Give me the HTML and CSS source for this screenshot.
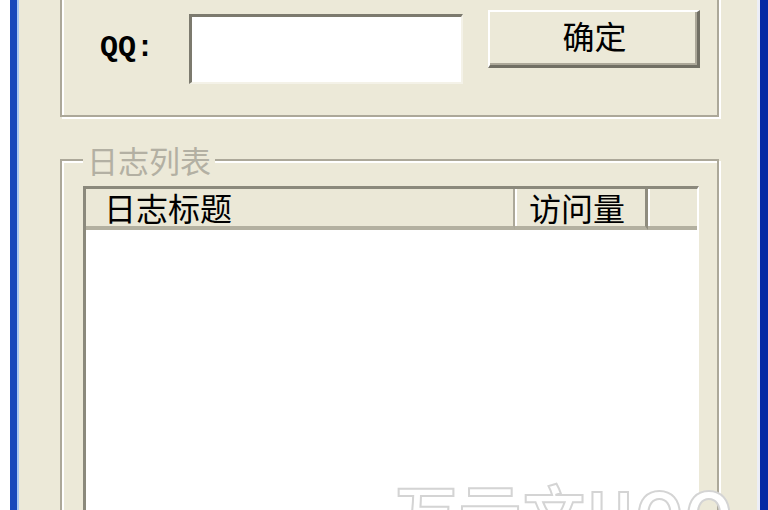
FILE: index.html
```html
<!DOCTYPE html>
<html lang="zh-CN">
<head>
<meta charset="utf-8">
<title>日志查看</title>
<link rel="stylesheet" href="styles.css">
</head>
<body>
<div class="window">
  <div class="client">
    <div class="group query">
      <div class="qq-label">QQ:</div>
      <div class="textbox"></div>
      <div class="button">确定</div>
    </div>
    <fieldset class="group logs">
      <legend>日志列表</legend>
      <div class="listview">
        <div class="header">
          <div class="col col-title">日志标题</div>
          <div class="col col-visits">访问量</div>
          <div class="col col-rest"></div>
        </div>
        <div class="rows"></div>
      </div>
    </fieldset>
  </div>
  <div class="mark">万云文UQQ</div>
</div>
</body>
</html>
```
FILE: styles.css
```css
* { box-sizing: border-box; }

html, body {
  margin: 0;
  padding: 0;
  background: #ffffff;
  overflow: hidden;
}

body {
  font-family: "Noto Sans CJK SC", "Liberation Sans", sans-serif;
  color: #000;
}

/* window frame: blue XP border on both sides */
.window {
  position: relative;
  margin-left: 10px;
  width: 758px;
  height: 510px;
  border-left: 7px solid #1848bb;
  border-right: 8px solid #0628a4;
  background: #ece9d8;
  box-shadow: inset 2px 0 0 #a9c9f3, inset -3px 0 0 #eceef6;
  overflow: hidden;
}

.client {
  padding: 0 41px 0 43px;
  display: flex;
  flex-direction: column;
}

/* etched group frame: grey line with a white line beside it */
.group {
  border: 2px solid #aca899;
  box-shadow: inset 2px 2px 0 #ffffff, 2px 2px 0 #ffffff;
}

.query {
  margin-top: -20px;
  height: 137px;
  display: flex;
  align-items: flex-start;
  padding: 28px 0 0 38px;
}

.qq-label {
  width: 89px;
  height: 70px;
  margin-top: 4px;
  line-height: 68px;
  font-family: "Liberation Mono", monospace;
  font-weight: bold;
  font-size: 30px;
  letter-spacing: 0;
}

.textbox {
  width: 274px;
  height: 70px;
  margin-top: 4px;
  background: #fff;
  border-style: solid;
  border-width: 3px 2px 2px 3px;
  border-color: #7c7a6e #f4f2e8 #f4f2e8 #7c7a6e;
}

.button {
  width: 212px;
  height: 58px;
  margin-left: 25px;
  border-style: solid;
  border-width: 2px 3px 3px 2px;
  border-color: #ffffff #716f64 #716f64 #ffffff;
  box-shadow: inset -2px -2px 0 #aca899;
  background: #ece9d8;
  font-size: 32px;
  line-height: 46px;
  text-align: center;
  padding-left: 2px;
}

.logs {
  margin: 28px 0 0 0;
  height: 420px;
  padding: 11px 18px 0 21px;
  min-width: 0;
}

.logs legend {
  padding: 0 4px;
  font-size: 31px;
  line-height: 30px;
  color: #b3b0a3;
  background: #ece9d8;
}

.listview {
  height: 340px;
  border-style: solid;
  border-width: 3px 2px 2px 3px;
  border-color: #8b897c #ffffff #ffffff #8b897c;
  background: #ffffff;
}

.header {
  display: flex;
  height: 41px;
  background: #ebe8d7;
}

.col {
  height: 41px;
  font-size: 32px;
  line-height: 36px;
  white-space: nowrap;
  border-bottom: 4px solid #b3b0a0;
  box-shadow: inset 2px 0 0 #ffffff;
}

.col-title {
  width: 429px;
  padding-left: 18px;
  border-right: 2px solid #aca899;
  box-shadow: none;
}

.col-visits {
  width: 133px;
  padding-left: 14px;
  border-right: 3px solid #8f8c7e;
}

.col-rest {
  flex: 1;
}

/* faint site mark over the lower right corner */
.mark {
  position: absolute;
  left: 378px;
  top: 476px;
  font-size: 62px;
  font-weight: bold;
  line-height: 70px;
  color: #ffffff;
  -webkit-text-stroke: 2px #d4d4d4;
  letter-spacing: 2px;
  white-space: nowrap;
}
```
